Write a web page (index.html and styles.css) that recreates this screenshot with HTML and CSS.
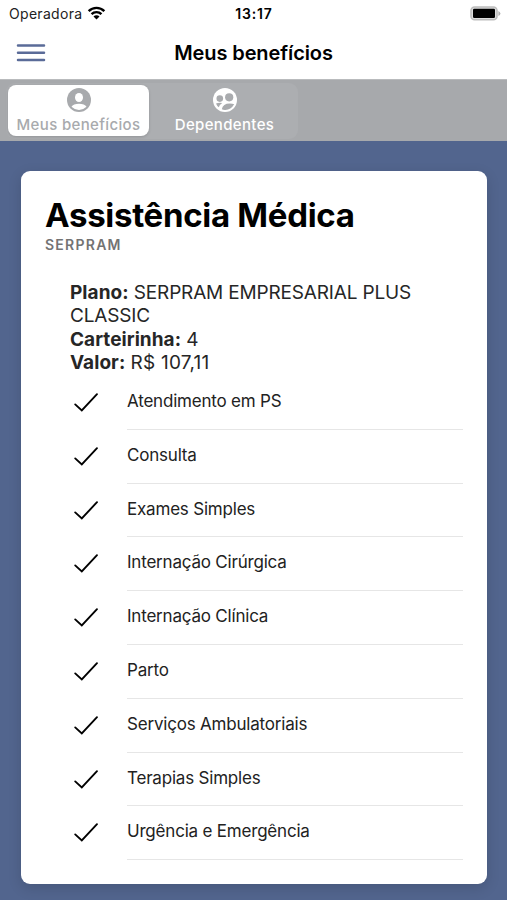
FILE: index.html
```html
<!DOCTYPE html>
<html lang="pt-BR">
<head>
<meta charset="utf-8">
<title>Meus benefícios</title>
<link rel="stylesheet" href="styles.css">
</head>
<body>
<svg class="defs" width="0" height="0" aria-hidden="true">
  <symbol id="check" viewBox="0 0 26 24"><path d="M2.2 13.4 8.8 19.4 24 3.200" fill="none" stroke="#000" stroke-width="1.9" stroke-linecap="round"/></symbol>
</svg>
<header class="header">
  <div class="status">
    <div class="carrier"><span>Operadora</span>
      <svg class="wifi" width="19" height="14" viewBox="0 0 20 15" fill="none" stroke="#000" stroke-width="2.6"><path d="M1.6 5.4a12 12 0 0 1 16.800 0M4.700 8.700a7.600 7.600 0 0 1 10.600 0"/><path d="M10 14.500 6.800 11.300a4.500 4.500 0 0 1 6.400 0Z" fill="#000" stroke="none"/></svg>
    </div>
    <div class="clock">13:17</div>
    <svg class="battery" width="31" height="15" viewBox="0 0 31 15"><rect x="1" y="1" width="26" height="12.800" rx="3.600" fill="#ddd" stroke="#bdbdbd" stroke-width="1.600"/><rect x="3" y="2.800" width="22" height="9.200" rx="1.200"/><path d="M28.400 5v5q2-1 2-2.500t-2-2.500Z" fill="#b0b0b0"/></svg>
  </div>
  <div class="toolbar">
    <svg class="menu" width="30" height="20" viewBox="0 0 30 20" stroke="#5a6b98" stroke-width="2.5" stroke-linecap="round"><path d="M2 2.6h26M2 9.8h26M2 17h26"/></svg>
    <h1 class="title">Meus benefícios</h1>
  </div>
</header>
<nav class="tabs">
  <div class="segment">
    <div class="tab active">
      <svg width="24" height="24" viewBox="0 0 24 24"><circle cx="12" cy="12" r="12" fill="#a8aaad"/><ellipse cx="12" cy="9.500" rx="4" ry="4.500" fill="#fff"/><path d="M4.500 18.800C5.500 16.600 8.500 15.700 12 15.700s6.500.9 7.500 3.100A10.300 10.300 0 0 1 12 21.900a10.300 10.300 0 0 1-7.500-3.100Z" fill="#fff"/></svg>
      <span class="label">Meus benefícios</span>
    </div>
    <div class="tab">
      <svg width="24" height="24" viewBox="0 0 24 24"><circle cx="12" cy="12" r="12" fill="#fff"/><g fill="#a9abae"><circle cx="6.800" cy="10.600" r="3.300"/><circle cx="16.200" cy="9.300" r="4.100"/><path d="M3 15.500q2.800-1.100 6.200-.5-2.900 1.700-3.400 4.200-2-1.400-2.800-3.700ZM8.800 21.200q1-5.700 8-5.700 2.800 0 4.400.7-3.500 6-9.400 5.700-1.600 0-3-.7Z"/></g></svg>
      <span class="label">Dependentes</span>
    </div>
  </div>
</nav>
<main class="content">
  <article class="card">
    <h2 class="name">Assistência Médica</h2>
    <p class="provider">SERPRAM</p>
    <div class="details">
      <p><b>Plano:</b> <span>SERPRAM EMPRESARIAL PLUS</span> <span>CLASSIC</span></p>
      <p><b>Carteirinha:</b> <span>4</span></p>
      <p><b>Valor:</b> <span class="amount">R$ 107,11</span></p>
    </div>
    <ul class="list">
      <li class="item"><svg class="check"><use href="#check"/></svg><span class="text">Atendimento em PS</span></li>
      <li class="item"><svg class="check"><use href="#check"/></svg><span class="text">Consulta</span></li>
      <li class="item"><svg class="check"><use href="#check"/></svg><span class="text">Exames Simples</span></li>
      <li class="item"><svg class="check"><use href="#check"/></svg><span class="text">Internação Cirúrgica</span></li>
      <li class="item"><svg class="check"><use href="#check"/></svg><span class="text">Internação Clínica</span></li>
      <li class="item"><svg class="check"><use href="#check"/></svg><span class="text">Parto</span></li>
      <li class="item"><svg class="check"><use href="#check"/></svg><span class="text">Serviços Ambulatoriais</span></li>
      <li class="item"><svg class="check"><use href="#check"/></svg><span class="text">Terapias Simples</span></li>
      <li class="item"><svg class="check"><use href="#check"/></svg><span class="text">Urgência e Emergência</span></li>
    </ul>
  </article>
</main>
</body>
</html>
```
FILE: styles.css
```css
* { box-sizing: border-box; }
body, h1, h2, p, ul { margin: 0; padding: 0; }
body {
  height: 900px;
  overflow: hidden;
  background: #52658e;
  color: #000;
  font-family: Inter, "Liberation Sans", sans-serif;
}
svg { display: block; flex: none; }
.defs { position: absolute; }

.header { height: 79px; background: #fff; }
.status {
  display: grid;
  grid-template-columns: 1fr auto 1fr;
  align-items: center;
  height: 27px;
  padding: 0 8px 0 9px;
}
.carrier { display: flex; align-items: center; gap: 5px; font-size: 14px; letter-spacing: .3px; color: #222; }
.wifi { margin-top: -1px; }
.clock { font-size: 14px; font-weight: 600; letter-spacing: .8px; }
.battery { justify-self: end; margin-right: -2px; }
.toolbar {
  display: grid;
  grid-template-columns: 30px 1fr 30px;
  align-items: center;
  height: 52px;
  padding: 0 16px;
}
.title { text-align: center; font-size: 20px; font-weight: 600; line-height: 24px; letter-spacing: -.1px; }

.tabs {
  height: 62px;
  padding: 3px 6px;
  background: #a7a9ac;
  border-top: 1px solid #b9bbbd;
}
.segment {
  display: flex;
  width: 292px;
  height: 56px;
  padding: 2px;
  border-radius: 9px;
  background: #acaeb1;
}
.tab {
  display: flex;
  flex-direction: column;
  align-items: center;
  width: 141px;
  height: 51px;
  padding-top: 3px;
  border-radius: 8px;
  color: #fff;
}
.tab + .tab { margin-left: 5px; }
.active { background: #fff; color: #a8aaad; box-shadow: 0 1px 3px rgba(0, 0, 0, .15); }
.label { margin-top: 3px; font-size: 15px; font-weight: 500; line-height: 20px; letter-spacing: .35px; white-space: nowrap; }

.content { padding: 30px 20px 0 21px; }
.card {
  height: 713px;
  padding: 26px 24px 0;
  background: #fff;
  border-radius: 9px;
  box-shadow: 0 4px 14px rgba(0, 0, 0, .14);
}
.name { font-size: 33px; font-weight: 700; line-height: 36px; letter-spacing: -.3px; white-space: nowrap; }
.provider { margin-top: 2px; font-size: 14px; font-weight: 600; line-height: 20px; letter-spacing: 1.25px; color: #737373; }
.details {
  margin: 26px 23px 0 25px;
  font-size: 19px;
  line-height: 23.3px;
  letter-spacing: -.17px;
  color: #262626;
}
.details b { letter-spacing: .05px; }
.details .amount { letter-spacing: .25px; }
.list { margin-top: 2px; list-style: none; }
.item { display: flex; height: 53.78px; }
.check { width: 26px; height: 24px; margin: 15px 28px 0 28px; }
.text {
  flex: 1;
  border-bottom: 1px solid #e6e6e6;
  font-size: 17px;
  line-height: 51px;
  letter-spacing: -.2px;
  color: #222;
}
```
